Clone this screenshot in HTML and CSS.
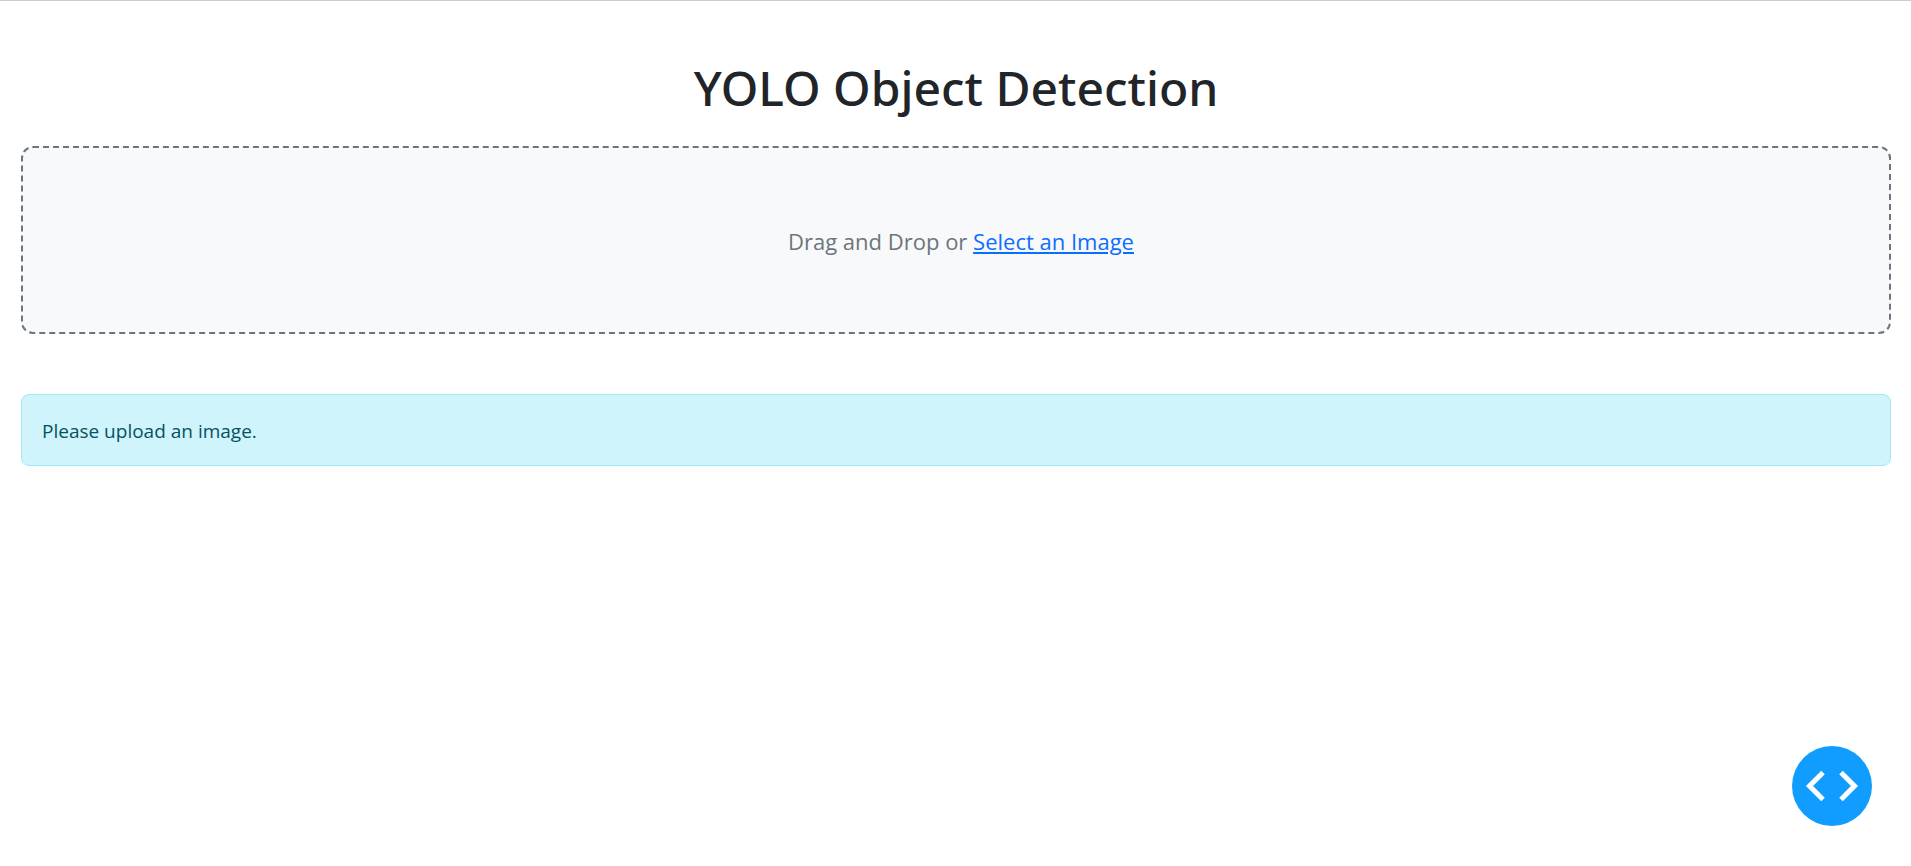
FILE: index.html
```
<!DOCTYPE html>
<html lang="en">
<head>
<meta charset="utf-8">
<title>YOLO Object Detection</title>
<link rel="stylesheet" href="styles.css">
</head>
<body>
<main class="page">
  <h1 class="title">YOLO Object Detection</h1>
  <div class="dropzone">
    <p class="prompt">Drag and Drop or <a class="select-link" href="#">Select an Image</a></p>
  </div>
  <div class="alert" role="alert">Please upload an image.</div>
</main>
<button class="debug-button" type="button" aria-label="Toggle developer tools">
  <svg class="debug-icon" viewBox="0 0 80 80" aria-hidden="true">
    <path d="M31 26.500 17.500 40 31 53.500M49 26.500 62.500 40 49 53.500"/>
  </svg>
</button>
</body>
</html>
```
FILE: styles.css
```
* {
  box-sizing: border-box;
}

body {
  margin: 0;
  border-top: 1px solid #ccc;
  background: #fff;
  color: #212529;
  font-family: "Segoe UI", "Open Sans", "Noto Sans", sans-serif;
  font-size: 19px;
  line-height: 30px;
}

.page {
  padding: 57px 20px 0 21px;
}

.title {
  margin: 0 0 28px;
  font-family: "Segoe UI", "Noto Sans", "Open Sans", sans-serif;
  font-size: 48px;
  font-weight: 500;
  line-height: 60px;
  text-align: center;
}

.dropzone {
  display: flex;
  align-items: center;
  justify-content: center;
  min-height: 188px;
  padding: 2px 0 0 10px;
  border: 2px dashed #6c757d;
  border-radius: 12px;
  background: #f8f9fa;
}

.prompt {
  margin: 0;
  color: #6c757d;
  font-size: 22px;
}

.select-link {
  color: #0d6efd;
  text-decoration: underline;
}

.alert {
  margin-top: 60px;
  padding: 21px 20px 19px;
  border: 1px solid #9eeaf9;
  border-radius: 8px;
  background: #cff4fc;
  color: #055160;
}

.debug-button {
  position: fixed;
  right: 39px;
  bottom: 40px;
  width: 80px;
  height: 80px;
  padding: 0;
  border: 0;
  border-radius: 50%;
  background: #119dff;
  cursor: pointer;
}

.debug-icon {
  display: block;
  width: 100%;
  height: 100%;
  fill: none;
  stroke: #fff;
  stroke-width: 5;
}
```
